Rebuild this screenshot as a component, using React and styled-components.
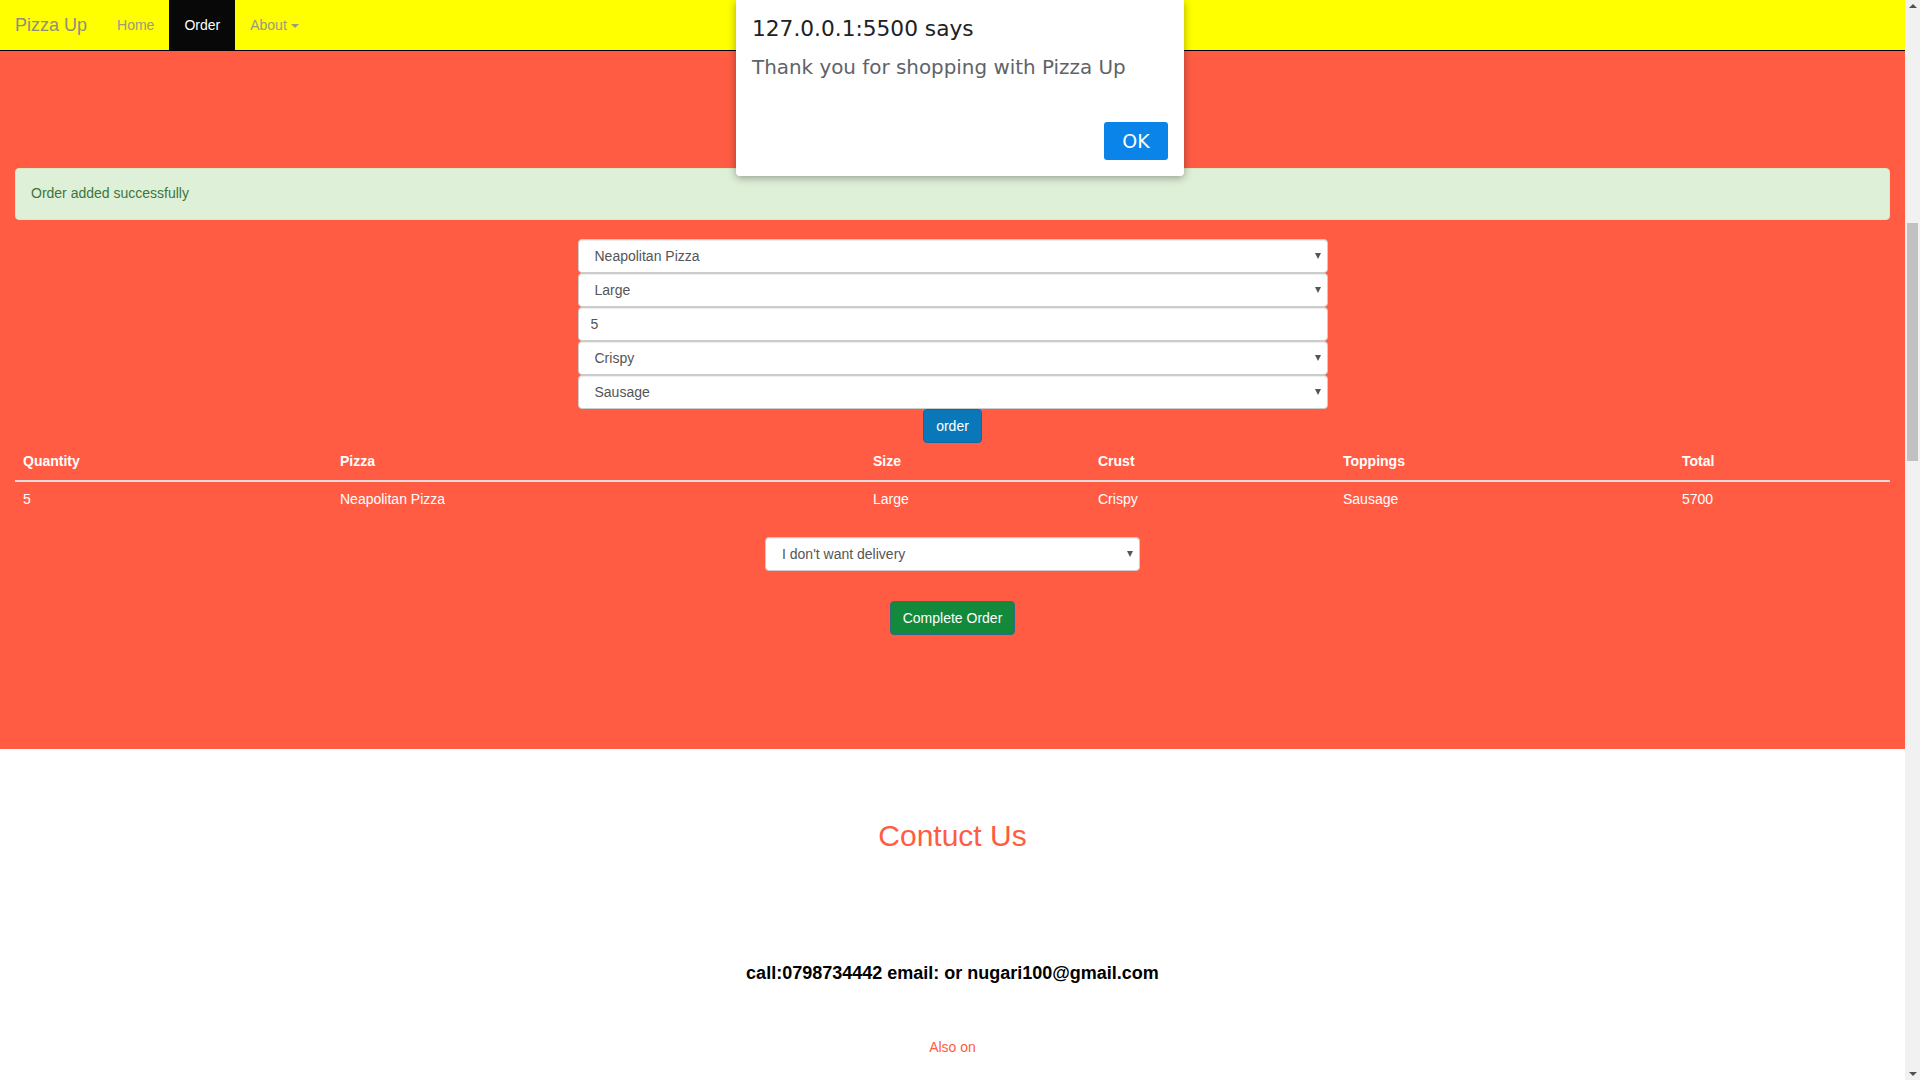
import React from 'react';
import styled, { createGlobalStyle } from 'styled-components';

const RED = '#ff5c43';

const GlobalStyle = createGlobalStyle`
  html, body {
    margin: 0;
    padding: 0;
    overflow: hidden;
  }
  body {
    font-family: "Liberation Sans", Arial, sans-serif;
    font-size: 14px;
    line-height: 1.42857;
    color: #333;
  }
  * { box-sizing: border-box; }
`;

const Shell = styled.div`
  position: relative;
  display: flex;
  height: 100vh;
  overflow: hidden;
`;

const Page = styled.div`
  flex: 1;
  min-width: 0;
  background: #fff;
`;

const Navbar = styled.nav`
  display: flex;
  align-items: stretch;
  height: 51px;
  background: #ffff00;
  border-bottom: 1px solid #000;
`;

const Brand = styled.a`
  padding: 0 15px;
  font-size: 18px;
  line-height: 50px;
  color: #8f8f7a;
`;

const NavLink = styled.a`
  display: flex;
  align-items: center;
  gap: 2px;
  padding: 1px 15px 0;
  font-size: 14px;
  color: ${p => (p.active ? '#fff' : '#9a9a80')};
  background: ${p => (p.active ? '#080808' : 'transparent')};
`;

const Caret = styled.span`
  display: inline-block;
  width: 0;
  height: 0;
  margin-left: 2px;
  border-top: 4px solid #9a9a80;
  border-left: 4px solid transparent;
  border-right: 4px solid transparent;
`;

const OrderSection = styled.section`
  background: ${RED};
  padding: 117px 15px 114px;
`;

const Alert = styled.div`
  padding: 15px;
  margin-bottom: 19px;
  border: 1px solid #d6e9c6;
  border-radius: 4px;
  background: #dff0d8;
  color: #3c763d;
`;

const OrderForm = styled.form`
  display: flex;
  flex-direction: column;
  align-items: center;
  margin-bottom: 1px;
`;

const Fields = styled.div`
  display: flex;
  flex-direction: column;
  width: ${p => p.width}px;
`;

const SelectWrap = styled.div`
  position: relative;
  width: 100%;
`;

const Select = styled.select`
  appearance: none;
  width: 100%;
  height: 34px;
  padding: 6px 16px;
  font-family: inherit;
  font-size: 14px;
  color: #555;
  background: #fff;
  border: 1px solid #ccc;
  border-radius: 4px;
  box-shadow: inset 0 1px 1px rgba(0, 0, 0, 0.075);
`;

const Arrow = styled.span`
  position: absolute;
  right: 7px;
  top: 14px;
  width: 0;
  height: 0;
  border-top: 6px solid #555;
  border-left: 3px solid transparent;
  border-right: 3px solid transparent;
  pointer-events: none;
`;

const Input = styled.input`
  width: 100%;
  height: 34px;
  padding: 6px 12px;
  font-family: inherit;
  font-size: 14px;
  color: #555;
  background: #fff;
  border: 1px solid #ccc;
  border-radius: 4px;
  box-shadow: inset 0 1px 1px rgba(0, 0, 0, 0.075);
`;

const Button = styled.button`
  height: 34px;
  padding: 6px 12px;
  font-family: inherit;
  font-size: 14px;
  color: #fff;
  background: ${p => (p.variant === 'success' ? '#12893b' : '#0a78b8')};
  border: 1px solid ${p => (p.variant === 'success' ? '#2d6b86' : '#0a6aa6')};
  border-radius: 4px;
`;

const Table = styled.table`
  width: 100%;
  margin-bottom: 19px;
  border-collapse: collapse;
  color: #fff;
`;

const Th = styled.th`
  width: ${p => p.w}px;
  padding: 8px;
  text-align: left;
  font-weight: bold;
  border-bottom: 2px solid #ddd;
`;

const Td = styled.td`
  padding: 8px;
`;

const DeliveryForm = styled.div`
  display: flex;
  flex-direction: column;
  align-items: center;
  gap: 30px;
`;

const ContactSection = styled.section`
  display: flex;
  flex-direction: column;
  align-items: center;
  padding-top: 70px;
`;

const ContactTitle = styled.h2`
  margin: 0;
  font-size: 30px;
  font-weight: 500;
  line-height: 33px;
  color: ${RED};
`;

const CallLine = styled.h4`
  margin: 111px 0 0;
  font-size: 18px;
  font-weight: bold;
  line-height: 20px;
  color: #000;
`;

const AlsoOn = styled.p`
  margin: 55px 0 0;
  font-size: 14px;
  color: ${RED};
`;

const ScrollTrack = styled.div`
  position: relative;
  width: 15px;
  height: 100vh;
  background: #f1f1f1;
  display: flex;
  flex-direction: column;
  align-items: center;
  justify-content: space-between;
  padding: 4px 0;
`;

const ScrollArrow = styled.span`
  width: 0;
  height: 0;
  border-left: 4px solid transparent;
  border-right: 4px solid transparent;
  ${p => (p.down ? 'border-top: 4px solid #505050;' : 'border-bottom: 4px solid #505050;')}
`;

const Thumb = styled.div`
  position: absolute;
  left: 2px;
  top: 223px;
  width: 11px;
  height: 238px;
  background: #c1c1c1;
`;

const Dialog = styled.div`
  position: absolute;
  top: 0;
  left: 736px;
  width: 448px;
  height: 176px;
  padding: 15px 16px 16px;
  display: flex;
  flex-direction: column;
  background: #fff;
  border-radius: 0 0 4px 4px;
  box-shadow: 0 2px 8px rgba(0, 0, 0, 0.35);
  font-family: "DejaVu Sans", sans-serif;
`;

const DialogTitle = styled.div`
  font-size: 21.7px;
  line-height: 28px;
  color: #202124;
`;

const DialogText = styled.div`
  margin-top: 13px;
  font-size: 19.9px;
  line-height: 24px;
  color: #5f6368;
`;

const DialogActions = styled.div`
  margin-top: auto;
  display: flex;
  justify-content: flex-end;
`;

const OkButton = styled.button`
  width: 64px;
  height: 38px;
  font-family: "DejaVu Sans", sans-serif;
  font-size: 19px;
  color: #fff;
  background: #0a84e8;
  border: none;
  border-radius: 3px;
`;

const DropSelect = ({ value, options }) => (
  <SelectWrap>
    <Select defaultValue={value}>
      {options.map(o => <option key={o}>{o}</option>)}
    </Select>
    <Arrow />
  </SelectWrap>
);

const columns = [
  ['Quantity', 317], ['Pizza', 533], ['Size', 225],
  ['Crust', 245], ['Toppings', 339], ['Total', 216],
];

const orders = [
  ['5', 'Neapolitan Pizza', 'Large', 'Crispy', 'Sausage', '5700'],
];

export default class App extends React.Component {
  render() {
    return (
      <Shell>
        <GlobalStyle />
        <Page>
          <Navbar>
            <Brand>Pizza Up</Brand>
            <NavLink>Home</NavLink>
            <NavLink active>Order</NavLink>
            <NavLink>About<Caret /></NavLink>
          </Navbar>

          <OrderSection>
            <Alert>Order added successfully</Alert>
            <OrderForm>
              <Fields width={750}>
                <DropSelect value="Neapolitan Pizza" options={['Neapolitan Pizza', 'Chicago Pizza', 'New York Pizza']} />
                <DropSelect value="Large" options={['Small', 'Medium', 'Large']} />
                <Input defaultValue="5" />
                <DropSelect value="Crispy" options={['Crispy', 'Stuffed', 'Gluten-free']} />
                <DropSelect value="Sausage" options={['Sausage', 'Mushroom', 'Pepperoni']} />
              </Fields>
              <Button type="button">order</Button>
            </OrderForm>

            <Table>
              <thead>
                <tr>
                  {columns.map(([name, w]) => <Th key={name} w={w}>{name}</Th>)}
                </tr>
              </thead>
              <tbody>
                {orders.map((row, i) => (
                  <tr key={i}>
                    {row.map((cell, j) => <Td key={j}>{cell}</Td>)}
                  </tr>
                ))}
              </tbody>
            </Table>

            <DeliveryForm>
              <Fields width={375}>
                <DropSelect value="I don't want delivery" options={["I don't want delivery", 'I want delivery']} />
              </Fields>
              <Button type="button" variant="success">Complete Order</Button>
            </DeliveryForm>
          </OrderSection>

          <ContactSection>
            <ContactTitle>Contuct Us</ContactTitle>
            <CallLine>call:0798734442 email: or nugari100@gmail.com</CallLine>
            <AlsoOn>Also on</AlsoOn>
          </ContactSection>
        </Page>

        <ScrollTrack>
          <ScrollArrow />
          <ScrollArrow down />
          <Thumb />
        </ScrollTrack>

        <Dialog>
          <DialogTitle>127.0.0.1:5500 says</DialogTitle>
          <DialogText>Thank you for shopping with Pizza Up</DialogText>
          <DialogActions>
            <OkButton>OK</OkButton>
          </DialogActions>
        </Dialog>
      </Shell>
    );
  }
}
